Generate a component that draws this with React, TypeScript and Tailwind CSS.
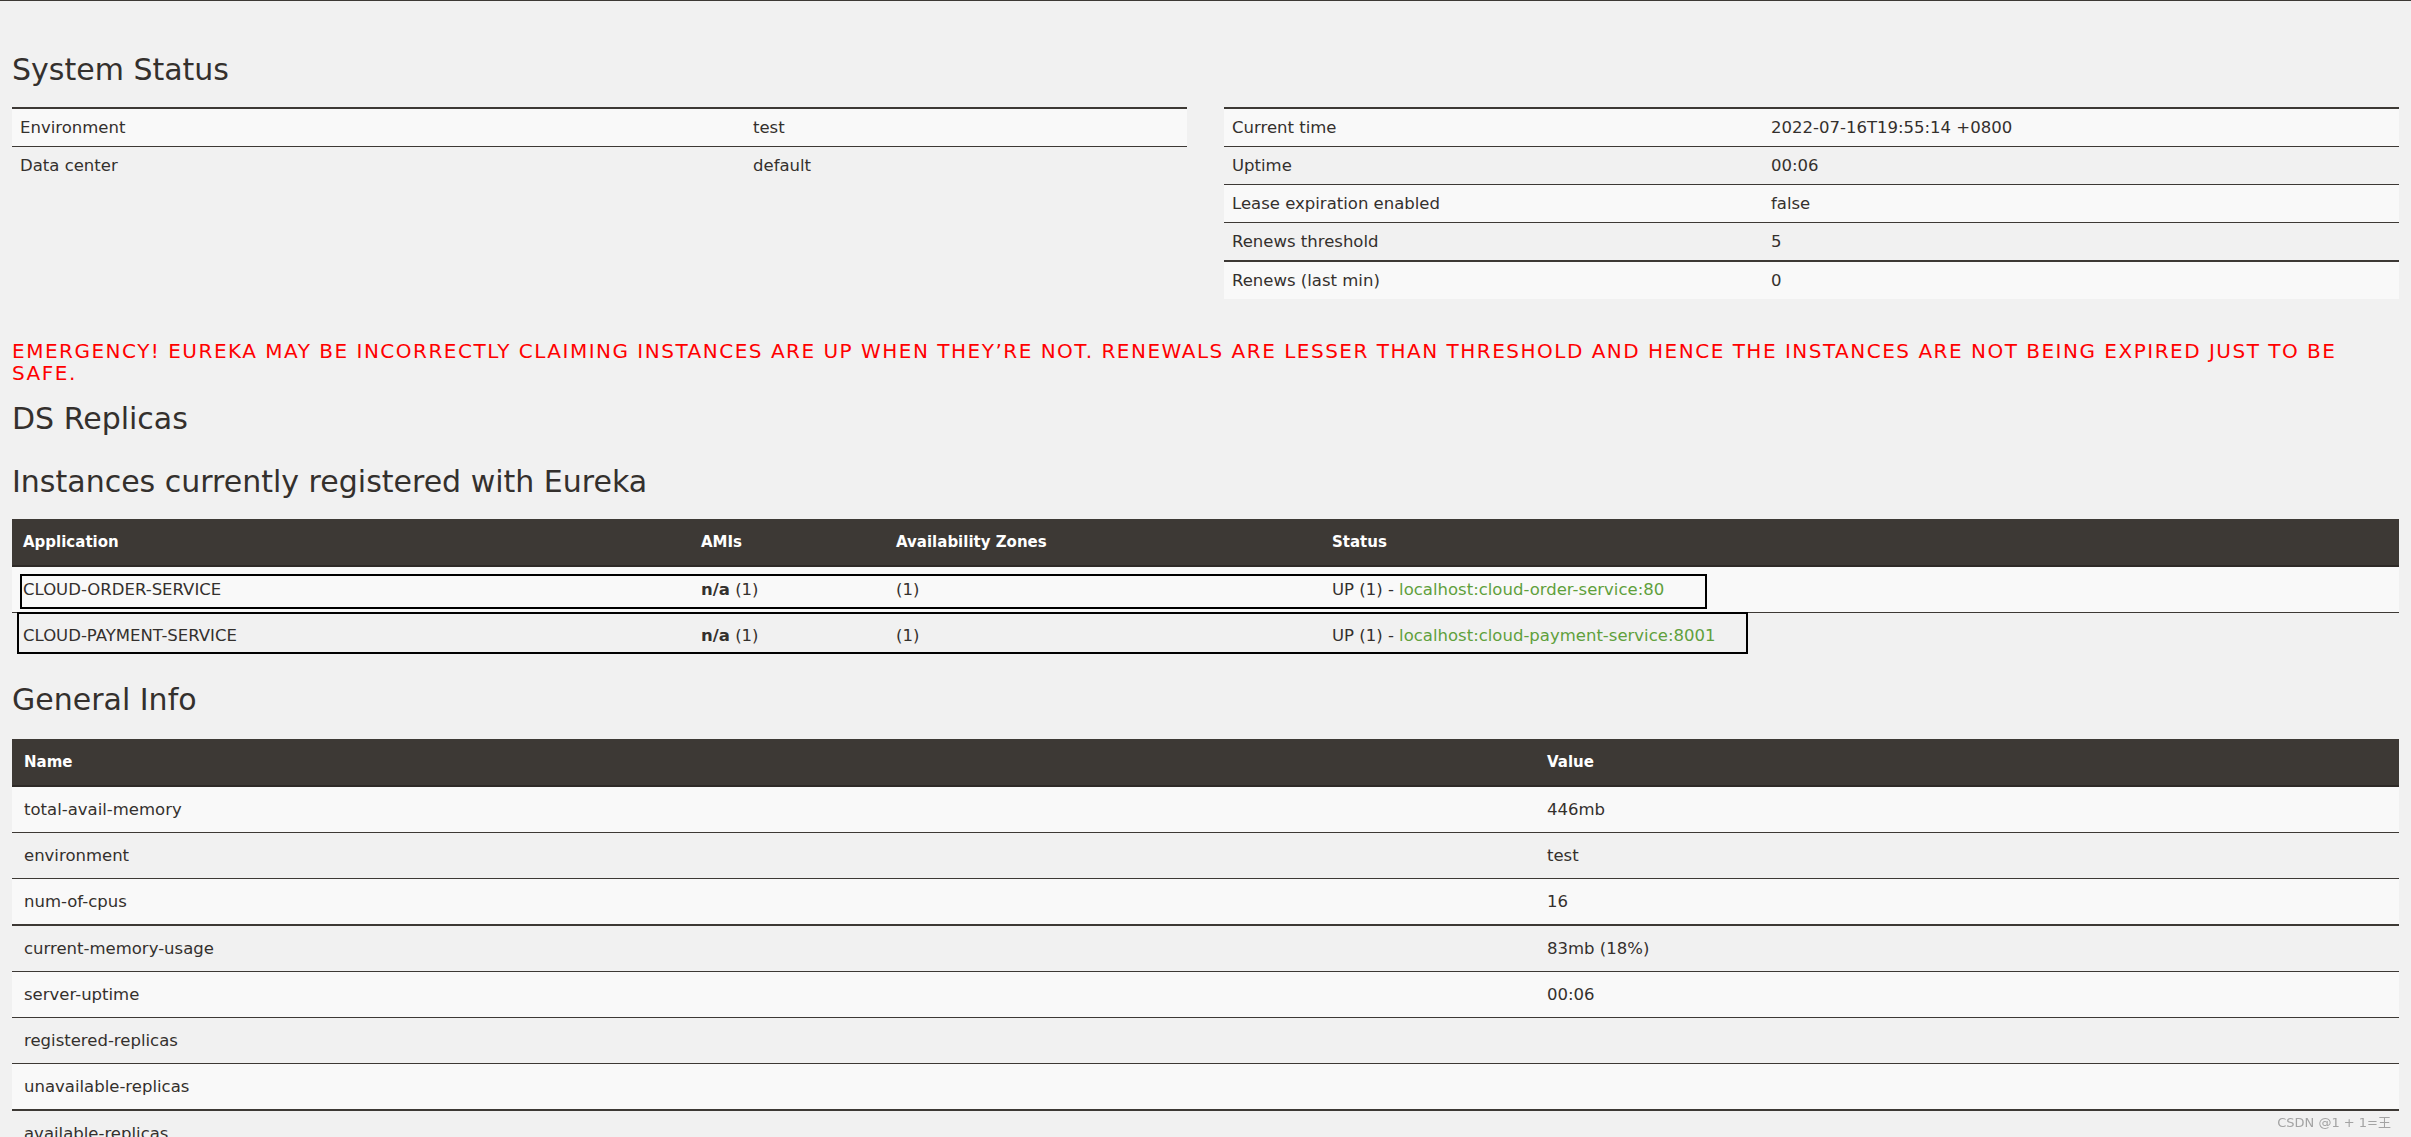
import React from 'react';

type Pair = { name: string; value: string; thick?: boolean };

const leftStatus: Pair[] = [
  { name: 'Environment', value: 'test' },
  { name: 'Data center', value: 'default' },
];

const rightStatus: Pair[] = [
  { name: 'Current time', value: '2022-07-16T19:55:14 +0800' },
  { name: 'Uptime', value: '00:06' },
  { name: 'Lease expiration enabled', value: 'false' },
  { name: 'Renews threshold', value: '5' },
  { name: 'Renews (last min)', value: '0', thick: true },
];

const generalInfo: Pair[] = [
  { name: 'total-avail-memory', value: '446mb' },
  { name: 'environment', value: 'test' },
  { name: 'num-of-cpus', value: '16' },
  { name: 'current-memory-usage', value: '83mb (18%)', thick: true },
  { name: 'server-uptime', value: '00:06' },
  { name: 'registered-replicas', value: '' },
  { name: 'unavailable-replicas', value: '' },
  { name: 'available-replicas', value: '', thick: true },
];

const instances = [
  { app: 'CLOUD-ORDER-SERVICE', link: 'localhost:cloud-order-service:80' },
  { app: 'CLOUD-PAYMENT-SERVICE', link: 'localhost:cloud-payment-service:8001' },
];

function Heading({ children, className = '' }: { children: React.ReactNode; className?: string }) {
  return <h2 className={`text-[30px] leading-[33px] font-normal text-[#34302d] ${className}`}>{children}</h2>;
}

function StatusTable({ rows, cols }: { rows: Pair[]; cols: string }) {
  return (
    <div className="border-t-2 border-[#3d3935]">
      {rows.map((r, i) => (
        <div
          key={r.name}
          className={`grid ${cols} box-content h-[37px] items-center px-[8px] ${
            i === 0 ? '' : r.thick ? 'border-t-2 border-[#3d3935]' : 'border-t border-[#3d3935]'
          } ${i % 2 === 0 ? 'bg-[#f9f9f9]' : ''}`}
        >
          <span>{r.name}</span>
          <span>{r.value}</span>
        </div>
      ))}
    </div>
  );
}

export default function App() {
  return (
    <div className="min-h-screen bg-[#f1f1f1] text-[16.5px] leading-[22px] text-[#34302d] font-['DejaVu_Sans','Noto_Sans_CJK_SC',sans-serif]">
      <div className="h-px bg-[#3d3935]" />

      <div className="px-[12px]">
        <Heading className="mt-[52px]">System Status</Heading>

        <div className="mt-[21px] grid grid-cols-2 gap-[37px] items-start">
          <StatusTable rows={leftStatus} cols="grid-cols-[733px_1fr]" />
          <StatusTable rows={rightStatus} cols="grid-cols-[539px_1fr]" />
        </div>

        <h4 className="mt-[41px] text-[20px] leading-[22px] tracking-[1.5px] text-[#ff0000]">
          EMERGENCY! EUREKA MAY BE INCORRECTLY CLAIMING INSTANCES ARE UP WHEN THEY’RE NOT. RENEWALS ARE LESSER THAN
          THRESHOLD AND HENCE THE INSTANCES ARE NOT BEING EXPIRED JUST TO BE SAFE.
        </h4>

        <Heading className="mt-[18px]">DS Replicas</Heading>
        <Heading className="mt-[30px]">Instances currently registered with Eureka</Heading>

        <div className="relative mt-[21px]">
          <div className="grid grid-cols-[678px_195px_436px_1fr] box-content h-[46px] items-center px-[11px] bg-[#3d3935] border-b-2 border-[#2e2a27] text-white font-bold text-[15px]">
            <span>Application</span>
            <span>AMIs</span>
            <span>Availability Zones</span>
            <span>Status</span>
          </div>
          {instances.map((it, i) => (
            <div
              key={it.app}
              className={`grid grid-cols-[678px_195px_436px_1fr] box-content h-[45px] items-center px-[11px] ${
                i === 0 ? 'bg-[#f9f9f9]' : 'border-t border-[#3d3935]'
              }`}
            >
              <span>{it.app}</span>
              <span>
                <b>n/a</b> (1)
              </span>
              <span>(1)</span>
              <span>
                UP (1) - <a className="text-[#5fa03c]">{it.link}</a>
              </span>
            </div>
          ))}

          {/* annotation boxes drawn over the rows */}
          <div className="absolute top-[55px] left-[8px] w-[1687px] h-[35px] border-2 border-black" />
          <div className="absolute top-[93px] left-[5px] w-[1731px] h-[42px] border-2 border-black" />
        </div>

        <Heading className="mt-[25px]">General Info</Heading>

        <div className="mt-[23px]">
          <div className="grid grid-cols-[1523px_1fr] box-content h-[46px] items-center px-[12px] bg-[#3d3935] border-b-2 border-[#2e2a27] text-white font-bold text-[15px]">
            <span>Name</span>
            <span>Value</span>
          </div>
          {generalInfo.map((r, i) => (
            <div
              key={r.name}
              className={`grid grid-cols-[1523px_1fr] box-content h-[45px] items-center px-[12px] ${
                i === 0 ? '' : r.thick ? 'border-t-2 border-[#3d3935]' : 'border-t border-[#3d3935]'
              } ${i % 2 === 0 ? 'bg-[#f9f9f9]' : ''}`}
            >
              <span>{r.name}</span>
              <span>{r.value}</span>
            </div>
          ))}
        </div>
      </div>

      <div className="fixed right-[20px] bottom-[6px] text-[13px] leading-[16px] text-[#a3a3a3]">CSDN @1 + 1=王</div>
    </div>
  );
}
